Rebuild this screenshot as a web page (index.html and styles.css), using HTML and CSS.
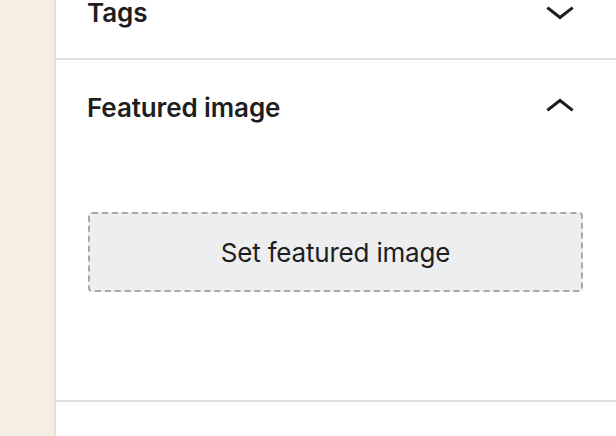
FILE: index.html
```html
<!DOCTYPE html>
<html lang="en">
<head>
<meta charset="utf-8">
<title>Featured image panel</title>
<link rel="stylesheet" href="styles.css">
</head>
<body>
  <div class="rail"></div>
  <div class="panel">
    <section class="section section-tags">
      <div class="title-row">
        <h2 class="title">Tags</h2>
        <svg class="chev" viewBox="0 0 48 48" width="48" height="48" aria-hidden="true"><polyline points="12.5,19.5 24,28.5 35.5,19.5"/></svg>
      </div>
    </section>
    <section class="section section-featured">
      <div class="title-row">
        <h2 class="title">Featured image</h2>
        <svg class="chev" viewBox="0 0 48 48" width="48" height="48" aria-hidden="true"><polyline points="12.5,25.5 24,16.5 35.5,25.5"/></svg>
      </div>
      <div class="body">
        <button class="set-image" type="button">Set featured image</button>
      </div>
    </section>
  </div>
</body>
</html>
```
FILE: styles.css
```css
html, body {
  margin: 0;
  padding: 0;
}
body {
  display: flex;
  height: 436px;
  overflow: hidden;
  background: #fff;
  font-family: Inter, "Noto Sans", "Liberation Sans", sans-serif;
  color: #1e1e1e;
}
.rail {
  width: 54px;
  flex: none;
  background: #f4eee3;
  border-right: 2px solid #e0e0e0;
}
.panel {
  flex: 1;
  display: flex;
  flex-direction: column;
  background: #fff;
}
.section {
  border-bottom: 2px solid #e0e0e0;
}
.section-tags {
  margin-top: -38px;
}
.title-row {
  height: 96px;
  box-sizing: border-box;
  display: flex;
  align-items: center;
  justify-content: space-between;
  padding: 0 32px 0 31px;
}
.section-tags .title-row {
  padding-top: 6px;
}
.title {
  margin: 0;
  font-size: 26px;
  font-weight: 600;
  line-height: 22px;
  letter-spacing: -0.1px;
}
.chev {
  flex: none;
  fill: none;
  stroke: #1e1e1e;
  stroke-width: 3;
  stroke-linecap: square;
  stroke-linejoin: miter;
}
.body {
  padding: 56px 33px 108px 32px;
}
.set-image {
  display: flex;
  align-items: center;
  justify-content: center;
  width: 100%;
  height: 80px;
  box-sizing: border-box;
  background: #edeef0;
  border: 2px dashed #a7aaad;
  border-radius: 4px;
  font-family: inherit;
  font-size: 26px;
  font-weight: 400;
  letter-spacing: -0.2px;
  color: #1e1e1e;
  padding: 0;
}
```
